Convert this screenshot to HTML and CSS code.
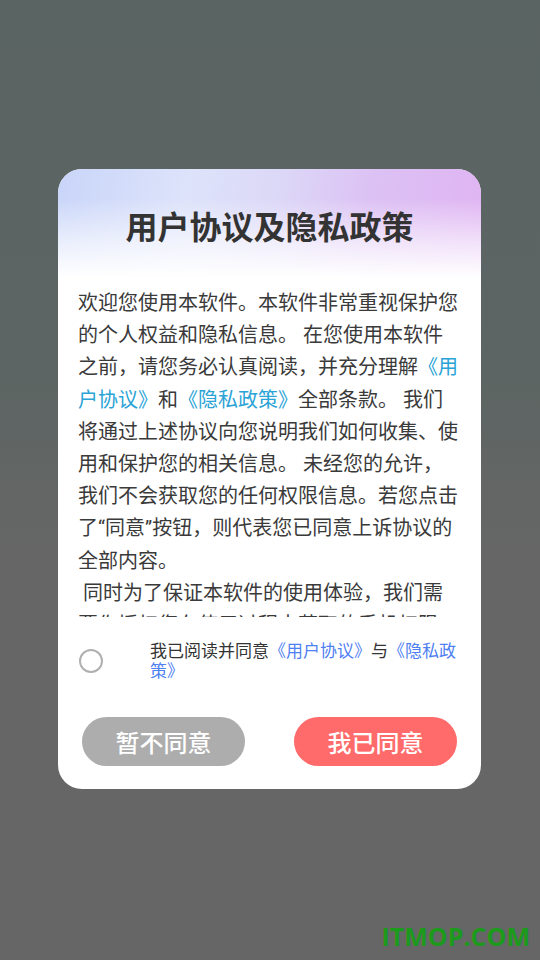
FILE: index.html
```html
<!DOCTYPE html>
<html lang="zh-CN">
<head>
<meta charset="utf-8">
<title>用户协议及隐私政策</title>
<link rel="stylesheet" href="styles.css">
</head>
<body>
<div class="screen">
  <div class="dialog">
    <div class="dialog-head">
      <h1 class="dialog-title">用户协议及隐私政策</h1>
    </div>
    <div class="dialog-body">
      <p class="policy-text">欢迎您使用本软件。本软件非常重视保护您的个人权益和隐私信息。 在您使用本软件之前，请您务必认真阅读，并充分理解<span class="link">《用户协议》</span>和<span class="link">《隐私政策》</span>全部条款。 我们将通过上述协议向您说明我们如何收集、使用和保护您的相关信息。 未经您的允许，我们不会获取您的任何权限信息。若您点击了“同意”按钮，则代表您已同意上诉协议的全部内容。<br>&nbsp;同时为了保证本软件的使用体验，我们需要你授权您在使用过程中获取的手机权限，包括存储权限、设备信息等。</p>
    </div>
    <div class="agree-row">
      <span class="radio"></span>
      <p class="agree-text">我已阅读并同意<span class="agree-link">《用户协议》</span>与<span class="agree-link">《隐私政策》</span></p>
    </div>
    <div class="actions">
      <button class="btn btn-reject">暂不同意</button>
      <button class="btn btn-accept">我已同意</button>
    </div>
  </div>
  <div class="watermark">ITMOP.COM</div>
</div>
</body>
</html>
```

FILE: styles.css
```css
* {
  box-sizing: border-box;
}

html, body {
  margin: 0;
  padding: 0;
}

body {
  width: 540px;
  height: 960px;
  overflow: hidden;
  font-family: "Roboto", "Noto Sans CJK SC", sans-serif;
  background: linear-gradient(to bottom, #5a6462 0%, #5c6563 38%, #666666 58%, #666666 100%);
}

.screen {
  position: relative;
  height: 960px;
  display: flex;
  flex-direction: column;
  padding: 169px 59px 0 58px;
}

.dialog {
  background: #ffffff;
  border-radius: 24px;
  overflow: hidden;
  display: flex;
  flex-direction: column;
}

.dialog-head {
  height: 118px;
  padding-top: 36px;
  background:
    linear-gradient(to bottom, rgba(255,255,255,0) 25%, rgba(255,255,255,0.6) 62%, #ffffff 92%),
    linear-gradient(100deg, #c9d5f9 0%, #dde3fa 30%, #dcd8f7 50%, #dcc1f4 72%, #e0b3f2 100%);
}

.dialog-title {
  margin: 0;
  text-align: center;
  font-family: "Noto Sans CJK SC", sans-serif;
  font-size: 32px;
  line-height: 40px;
  font-weight: 700;
  color: #333333;
}

.dialog-body {
  height: 330px;
  overflow: hidden;
  padding: 0 22px 0 20px;
}

.policy-text {
  margin: 0;
  font-size: 20px;
  line-height: 32.2px;
  color: #3a3a3a;
}

.link {
  color: #2aa3d6;
}

.agree-row {
  margin-top: 24px;
  padding: 0 21px;
  display: flex;
  align-items: center;
  gap: 47px;
}

.radio {
  flex: none;
  width: 24px;
  height: 24px;
  border: 2px solid #b0b0b0;
  border-radius: 50%;
}

.agree-text {
  margin: 0;
  flex: 1;
  font-size: 17px;
  line-height: 20px;
  color: #333333;
}

.agree-link {
  color: #4f80f2;
}

.actions {
  margin-top: 36px;
  padding: 0 24px 23px;
  display: flex;
  justify-content: space-between;
}

.btn {
  width: 163px;
  height: 49px;
  border: none;
  border-radius: 25px;
  font-family: "Noto Sans CJK SC", sans-serif;
  font-size: 24px;
  line-height: 49px;
  font-weight: 500;
  color: #ffffff;
  padding: 0;
}

.btn-reject {
  background: #adadad;
}

.btn-accept {
  background: #ff6b6b;
}

.watermark {
  position: absolute;
  right: 10px;
  bottom: 11px;
  font-family: "Open Sans", sans-serif;
  font-weight: 700;
  font-size: 25px;
  line-height: 25px;
  color: #1b9a1b;
}
```
